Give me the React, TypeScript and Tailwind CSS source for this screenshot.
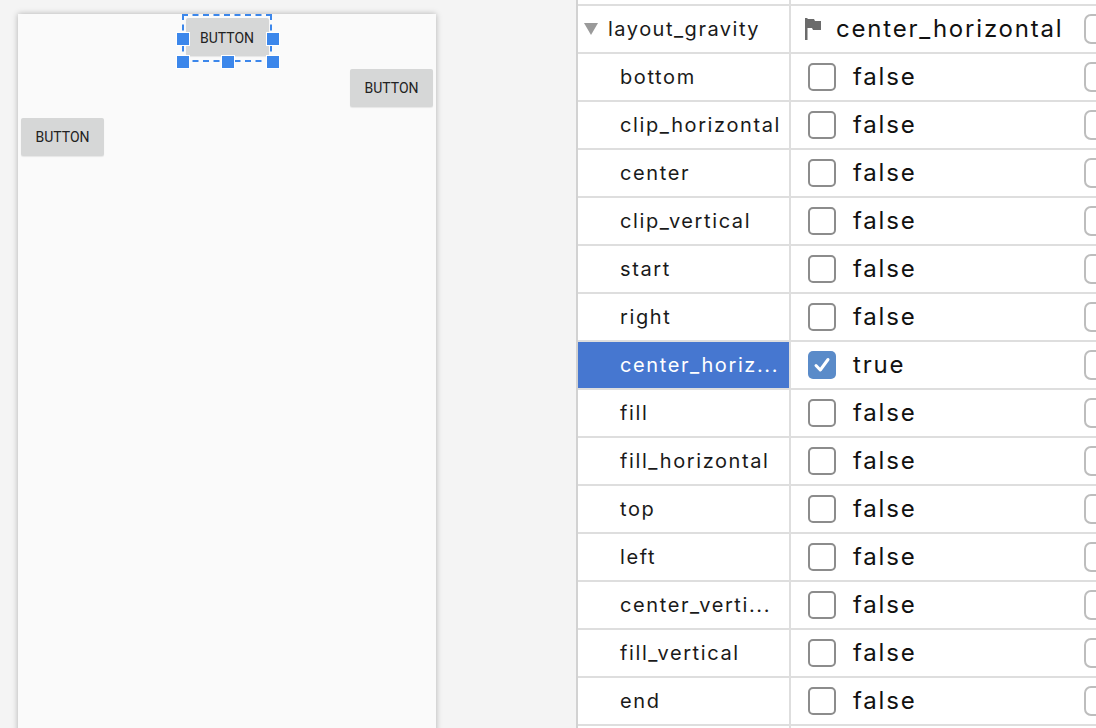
import React from "react";

const rows: { name: string; value: boolean; selected?: boolean }[] = [
  { name: "bottom", value: false },
  { name: "clip_horizontal", value: false },
  { name: "center", value: false },
  { name: "clip_vertical", value: false },
  { name: "start", value: false },
  { name: "right", value: false },
  { name: "center_horiz...", value: true, selected: true },
  { name: "fill", value: false },
  { name: "fill_horizontal", value: false },
  { name: "top", value: false },
  { name: "left", value: false },
  { name: "center_verti...", value: false },
  { name: "fill_vertical", value: false },
  { name: "end", value: false },
];

const sans = "font-['Inter','Liberation_Sans',sans-serif]";

function AndroidButton({ className }: { className?: string }) {
  return (
    <div
      className={`w-[83px] h-[38px] bg-[#d6d7d7] rounded-[2px] shadow-[0_1px_1px_rgba(0,0,0,0.08)] flex items-center justify-center font-['Roboto',sans-serif] font-normal text-[14px] text-[#222] ${className ?? ""}`}
    >
      BUTTON
    </div>
  );
}

function Handle({ className }: { className: string }) {
  return <div className={`absolute w-[14px] h-[14px] bg-[#3c87eb] border border-white ${className}`} />;
}

function Checkbox({ checked }: { checked: boolean }) {
  if (checked) {
    return (
      <div className="w-[28px] h-[28px] rounded-[5px] bg-[#5a8bc9] flex items-center justify-center">
        <svg width="20" height="20" viewBox="0 0 20 20">
          <path d="M4 10.5 L8.3 15 L16 4.5" fill="none" stroke="white" strokeWidth="3" strokeLinecap="round" strokeLinejoin="round" />
        </svg>
      </div>
    );
  }
  return <div className="w-[28px] h-[28px] rounded-[5px] border-2 border-[#8c8c8c] bg-white" />;
}

function Pill() {
  return <div className="ml-auto mr-[-8px] w-[20px] h-[30px] rounded-[7px] border-2 border-[#bdbdbd] bg-white shrink-0" />;
}

export default function App() {
  return (
    <div className="w-[1096px] h-[728px] overflow-hidden flex bg-[#f4f4f4]">
      {/* Design surface */}
      <div className="w-[576px] shrink-0 pl-[18px] pt-[14px]">
        <div className="relative w-[418px] h-[740px] bg-[#fafafa] shadow-[0_0_6px_rgba(0,0,0,0.28)] flex flex-col">
          <AndroidButton className="self-center mt-[4px] h-[37px] pt-[2px]" />
          <AndroidButton className="self-end mr-[3px] mt-[13px]" />
          <AndroidButton className="self-start ml-[3px] mt-[11px]" />
          {/* selection overlay */}
          <div className="absolute left-[164px] top-0 w-[90px] h-[48px] border-2 border-dashed border-[#3c87eb]" />
          <Handle className="left-[158px] top-[18px]" />
          <Handle className="left-[248px] top-[18px]" />
          <Handle className="left-[158px] top-[41px]" />
          <Handle className="left-[203px] top-[41px]" />
          <Handle className="left-[248px] top-[41px]" />
        </div>
      </div>

      {/* Attributes panel */}
      <div className={`flex-1 border-l-2 border-[#d2d2d2] bg-white flex flex-col ${sans}`}>
        <div className="h-[4px] flex shrink-0">
          <div className="w-[211px]" />
          <div className="flex-1 border-l-2 border-[#dedede]" />
        </div>
        <div className="h-[48px] border-t-2 border-[#dedede] flex shrink-0">
          <div className="w-[211px] flex items-center pl-[6px] text-[20px] tracking-[1.5px] text-[#1a1a1a]">
            <svg width="14" height="13" viewBox="0 0 14 13" className="mr-[10px] mt-[1px]">
              <path d="M0 0 H14 L7 12 Z" fill="#9a9a9a" />
            </svg>
            layout_gravity
          </div>
          <div className="flex-1 border-l-2 border-[#dedede] flex items-center pl-[14px]">
            <svg width="16" height="22" viewBox="0 0 16 22" className="mr-[15px]">
              <rect x="0" y="0" width="2.5" height="22" fill="#6b6b6b" />
              <path d="M2 1 H9 L10 3 H16 V12 H8 L7 10 H2 Z" fill="#6b6b6b" />
            </svg>
            <span className="text-[24px] tracking-[1.8px] text-[#111]">center_horizontal</span>
            <Pill />
          </div>
        </div>
        {rows.map((r) => (
          <div key={r.name} className="h-[48px] border-t-2 border-[#dedede] flex shrink-0">
            <div
              className={`w-[211px] flex items-center pl-[42px] text-[20px] tracking-[1.6px] whitespace-nowrap ${
                r.selected ? "bg-[#4677d0] text-white" : "text-[#1a1a1a]"
              }`}
            >
              {r.name}
            </div>
            <div className="flex-1 border-l-2 border-[#dedede] flex items-center pl-[17px]">
              <Checkbox checked={r.value} />
              <span className="ml-[17px] text-[24px] tracking-[1.8px] text-[#111]">{r.value ? "true" : "false"}</span>
              <Pill />
            </div>
          </div>
        ))}
        <div className="h-[10px] border-t-2 border-[#dedede] flex shrink-0">
          <div className="w-[211px]" />
          <div className="flex-1 border-l-2 border-[#dedede]" />
        </div>
      </div>
    </div>
  );
}
